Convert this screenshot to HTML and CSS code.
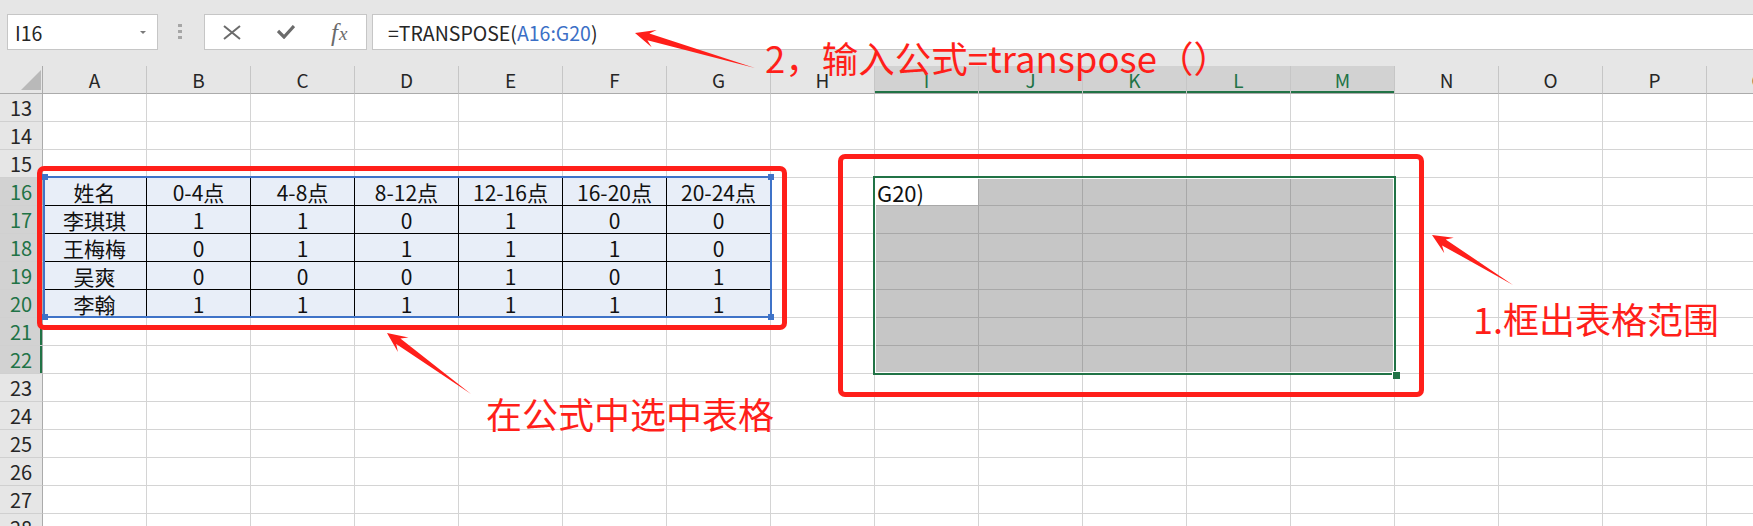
FILE: index.html
```html
<!DOCTYPE html>
<html lang="zh-CN">
<head>
<meta charset="utf-8">
<title>TRANSPOSE 转置</title>
<link rel="stylesheet" href="styles.css">
</head>
<body>
<div class="app">
  <div class="toolbar">
    <div class="namebox"><span>I16</span><svg class="dd" width="6" height="3" viewBox="0 0 6 3"><polygon points="0,0 6,0 3,3"/></svg></div>
    <div class="grip"><i></i><i></i><i></i></div>
    <div class="fbtns">
      <span class="fb"><svg width="18" height="15" viewBox="0 0 18 15"><path d="M1 1 L17 14 M17 1 L1 14"/></svg></span>
      <span class="fb"><svg class="chk" width="18" height="14" viewBox="0 0 18 14"><polyline points="1,6 7,12 17,1"/></svg></span>
      <span class="fb fx"><i>f</i><i class="x">x</i></span>
    </div>
    <div class="fbox">=TRANSPOSE(<span class="ref">A16:G20</span>)</div>
  </div>

  <div class="sheet">
    <div class="row hdr">
      <div class="corner"><svg width="20" height="20" viewBox="0 0 20 20"><polygon points="20,0 20,20 0,20"/></svg></div>
      <div>A</div><div>B</div><div>C</div><div>D</div><div>E</div><div>F</div><div>G</div><div>H</div>
      <div class="sel">I</div><div class="sel">J</div><div class="sel">K</div><div class="sel">L</div><div class="sel">M</div>
      <div>N</div><div>O</div><div>P</div><div>Q</div>
    </div>

    <div class="row"><div class="rh">13</div><div></div><div></div><div></div><div></div><div></div><div></div><div></div><div></div><div></div><div></div><div></div><div></div><div></div><div></div><div></div><div></div><div></div></div>
    <div class="row"><div class="rh">14</div><div></div><div></div><div></div><div></div><div></div><div></div><div></div><div></div><div></div><div></div><div></div><div></div><div></div><div></div><div></div><div></div><div></div></div>
    <div class="row"><div class="rh">15</div><div></div><div></div><div></div><div></div><div></div><div></div><div></div><div></div><div></div><div></div><div></div><div></div><div></div><div></div><div></div><div></div><div></div></div>

    <div class="row"><div class="rh sel">16</div><div class="t">姓名</div><div class="t">0-4点</div><div class="t">4-8点</div><div class="t">8-12点</div><div class="t">12-16点</div><div class="t">16-20点</div><div class="t">20-24点</div><div></div><div class="act">G20)</div><div class="g"></div><div class="g"></div><div class="g"></div><div class="g"></div><div></div><div></div><div></div><div></div></div>
    <div class="row"><div class="rh sel">17</div><div class="t">李琪琪</div><div class="t">1</div><div class="t">1</div><div class="t">0</div><div class="t">1</div><div class="t">0</div><div class="t">0</div><div></div><div class="g"></div><div class="g"></div><div class="g"></div><div class="g"></div><div class="g"></div><div></div><div></div><div></div><div></div></div>
    <div class="row"><div class="rh sel">18</div><div class="t">王梅梅</div><div class="t">0</div><div class="t">1</div><div class="t">1</div><div class="t">1</div><div class="t">1</div><div class="t">0</div><div></div><div class="g"></div><div class="g"></div><div class="g"></div><div class="g"></div><div class="g"></div><div></div><div></div><div></div><div></div></div>
    <div class="row"><div class="rh sel">19</div><div class="t">吴爽</div><div class="t">0</div><div class="t">0</div><div class="t">0</div><div class="t">1</div><div class="t">0</div><div class="t">1</div><div></div><div class="g"></div><div class="g"></div><div class="g"></div><div class="g"></div><div class="g"></div><div></div><div></div><div></div><div></div></div>
    <div class="row"><div class="rh sel">20</div><div class="t">李翰</div><div class="t">1</div><div class="t">1</div><div class="t">1</div><div class="t">1</div><div class="t">1</div><div class="t">1</div><div></div><div class="g"></div><div class="g"></div><div class="g"></div><div class="g"></div><div class="g"></div><div></div><div></div><div></div><div></div></div>
    <div class="row"><div class="rh sel">21</div><div></div><div></div><div></div><div></div><div></div><div></div><div></div><div></div><div class="g"></div><div class="g"></div><div class="g"></div><div class="g"></div><div class="g"></div><div></div><div></div><div></div><div></div></div>
    <div class="row"><div class="rh sel">22</div><div></div><div></div><div></div><div></div><div></div><div></div><div></div><div></div><div class="g"></div><div class="g"></div><div class="g"></div><div class="g"></div><div class="g"></div><div></div><div></div><div></div><div></div></div>

    <div class="row"><div class="rh">23</div><div></div><div></div><div></div><div></div><div></div><div></div><div></div><div></div><div></div><div></div><div></div><div></div><div></div><div></div><div></div><div></div><div></div></div>
    <div class="row"><div class="rh">24</div><div></div><div></div><div></div><div></div><div></div><div></div><div></div><div></div><div></div><div></div><div></div><div></div><div></div><div></div><div></div><div></div><div></div></div>
    <div class="row"><div class="rh">25</div><div></div><div></div><div></div><div></div><div></div><div></div><div></div><div></div><div></div><div></div><div></div><div></div><div></div><div></div><div></div><div></div><div></div></div>
    <div class="row"><div class="rh">26</div><div></div><div></div><div></div><div></div><div></div><div></div><div></div><div></div><div></div><div></div><div></div><div></div><div></div><div></div><div></div><div></div><div></div></div>
    <div class="row"><div class="rh">27</div><div></div><div></div><div></div><div></div><div></div><div></div><div></div><div></div><div></div><div></div><div></div><div></div><div></div><div></div><div></div><div></div><div></div></div>
    <div class="row"><div class="rh">28</div><div></div><div></div><div></div><div></div><div></div><div></div><div></div><div></div><div></div><div></div><div></div><div></div><div></div><div></div><div></div><div></div><div></div></div>
  </div>

  <!-- overlays -->
  <div class="refbox"><i class="hd h-tl"></i><i class="hd h-tr"></i><i class="hd h-bl"></i><i class="hd h-br"></i></div>
  <div class="selbox"><i class="fill"></i></div>

  <div class="redbox rb1"></div>
  <div class="redbox rb2"></div>

  <svg class="arrows" width="1753" height="526" viewBox="0 0 1753 526">
    <polygon points="755,68 649.4,33.5 656.7,30 635,33 651.7,47.2 647.4,40.3"/>
    <polygon points="471,394 400.4,338.4 408.5,337.5 387,333 397.9,352.1 396.2,344"/>
    <polygon points="1513,285 1445.7,239.4 1453.7,237.8 1432,235 1444.3,253.2 1442.1,245.4"/>
  </svg>

  <div class="note n-top">2，输入公式=transpose（）</div>
  <div class="note n-left">在公式中选中表格</div>
  <div class="note n-right">1.框出表格范围</div>
</div>
</body>
</html>
```
FILE: styles.css
```css
* { box-sizing: border-box; }

body {
  margin: 0;
  background: #ffffff;
  font-family: "Noto Sans CJK SC", "Noto Sans", sans-serif;
}

.app {
  position: relative;
  width: 1753px;
  height: 526px;
  overflow: hidden;
  background: #e6e6e6;
}

/* ---------- formula bar ---------- */
.toolbar {
  height: 66px;
  display: flex;
  align-items: flex-start;
  padding: 14px 0 0 7px;
}

.namebox {
  flex: 0 0 151px;
  height: 36px;
  background: #fff;
  border: 1px solid #c6c6c6;
  display: flex;
  align-items: center;
  justify-content: space-between;
  padding: 0 11px 0 7px;
  font-size: 19.5px;
  color: #262626;
}
.dd polygon { fill: #7a7a7a; }

.grip {
  flex: 0 0 5px;
  margin-left: 20px;
  padding-top: 10px;
  display: flex;
  flex-direction: column;
  gap: 3px;
}
.grip i {
  display: block;
  width: 4px;
  height: 3px;
  background: #a6a6a6;
}

.fbtns {
  flex: 0 0 163px;
  margin-left: 21px;
  height: 36px;
  background: #fff;
  border: 1px solid #c6c6c6;
  display: flex;
}
.fb {
  flex: 1;
  display: flex;
  align-items: center;
  justify-content: center;
}
.fb svg path { stroke: #6b6b6b; stroke-width: 2; fill: none; }
.fb .chk polyline { stroke: #6b6b6b; stroke-width: 3.2; fill: none; }
.fx {
  font-family: "Liberation Serif", "DejaVu Serif", serif;
  font-size: 25px;
  color: #6b6b6b;
  line-height: 1;
}
.fx i { font-style: italic; }
.fx .x { font-size: 19px; margin-left: 1px; position: relative; top: 1px; }

.fbox {
  flex: 1;
  margin-left: 5px;
  height: 36px;
  background: #fff;
  border: 1px solid #c6c6c6;
  border-right: 0;
  padding-left: 15px;
  display: flex;
  align-items: center;
  font-size: 19.5px;
  color: #262626;
  white-space: nowrap;
}
.ref { color: #3b6fc6; }

/* ---------- grid ---------- */
.row {
  display: flex;
  height: 28px;
}
.row > div {
  flex: 0 0 104px;
  height: 28px;
  background: #fff;
  border-right: 1px solid #d4d4d4;
  border-bottom: 1px solid #d4d4d4;
}

.row.hdr > div {
  background: #e6e6e6;
  border-right-color: #c6c6c6;
  border-bottom-color: #ababab;
  text-align: center;
  font-size: 19px;
  line-height: 28px;
  color: #262626;
}
.row.hdr > .corner {
  flex-basis: 43px;
  border-right-color: #ababab;
  padding: 4px 0 0 19px;
  line-height: 0;
}
.corner polygon { fill: #b9b9b9; }
.row.hdr > .sel {
  background: #d2d2d2;
  color: #217346;
  box-shadow: inset 0 -2px 0 #217346;
}

.row > .rh {
  flex-basis: 43px;
  background: #e6e6e6;
  border-right-color: #ababab;
  border-bottom-color: #d0d0d0;
  text-align: center;
  font-size: 20px;
  line-height: 28px;
  color: #262626;
}
.row > .rh.sel {
  background: #d2d2d2;
  color: #217346;
  box-shadow: inset -2px 0 0 #217346;
}

.row > .t {
  background: #e8eef8;
  border-right-color: #000;
  border-bottom-color: #000;
  text-align: center;
  font-size: 21px;
  line-height: 28px;
  color: #111;
  white-space: nowrap;
}

.row > .g {
  background: #c6c6c6;
  border-right-color: #a8a8a8;
  border-bottom-color: #a8a8a8;
}
.row > .act {
  background: #fff;
  border-right-color: #a8a8a8;
  border-bottom-color: #a8a8a8;
  padding-left: 2px;
  font-size: 22px;
  line-height: 28px;
  color: #111;
  white-space: nowrap;
}

/* ---------- overlays ---------- */
.refbox {
  position: absolute;
  left: 43px;
  top: 176px;
  width: 729px;
  height: 142px;
  border: 2px solid #3f73c8;
}
.hd {
  position: absolute;
  width: 6px;
  height: 6px;
  background: #3f73c8;
}
.h-tl { left: -3px; top: -4px; }
.h-tr { right: -4px; top: -4px; }
.h-bl { left: -3px; bottom: -4px; }
.h-br { right: -4px; bottom: -4px; }

.selbox {
  position: absolute;
  left: 873px;
  top: 176px;
  width: 523px;
  height: 199px;
  border: 2px solid #217346;
  box-shadow: inset 0 0 0 1px #ffffff;
}
.fill {
  position: absolute;
  right: -6px;
  bottom: -6px;
  width: 8px;
  height: 8px;
  background: #217346;
  border: 1px solid #fff;
  border-right: 0;
  border-bottom: 0;
}

.redbox {
  position: absolute;
  border: 5px solid #ff1f1a;
  border-radius: 7px;
}
.rb1 { left: 37px; top: 166px; width: 750px; height: 164px; }
.rb2 { left: 838px; top: 154px; width: 586px; height: 243px; }

.arrows {
  position: absolute;
  left: 0;
  top: 0;
}
.arrows polygon { fill: #ff1f1a; }

.note {
  position: absolute;
  font-family: "Noto Sans CJK SC", "Noto Sans", sans-serif;
  font-size: 36px;
  line-height: 36px;
  color: #ff1f1a;
  white-space: nowrap;
}
.n-top { left: 765px; top: 40px; font-size: 36.5px; }
.n-left { left: 486px; top: 395px; }
.n-right { left: 1473px; top: 300px; }
```
